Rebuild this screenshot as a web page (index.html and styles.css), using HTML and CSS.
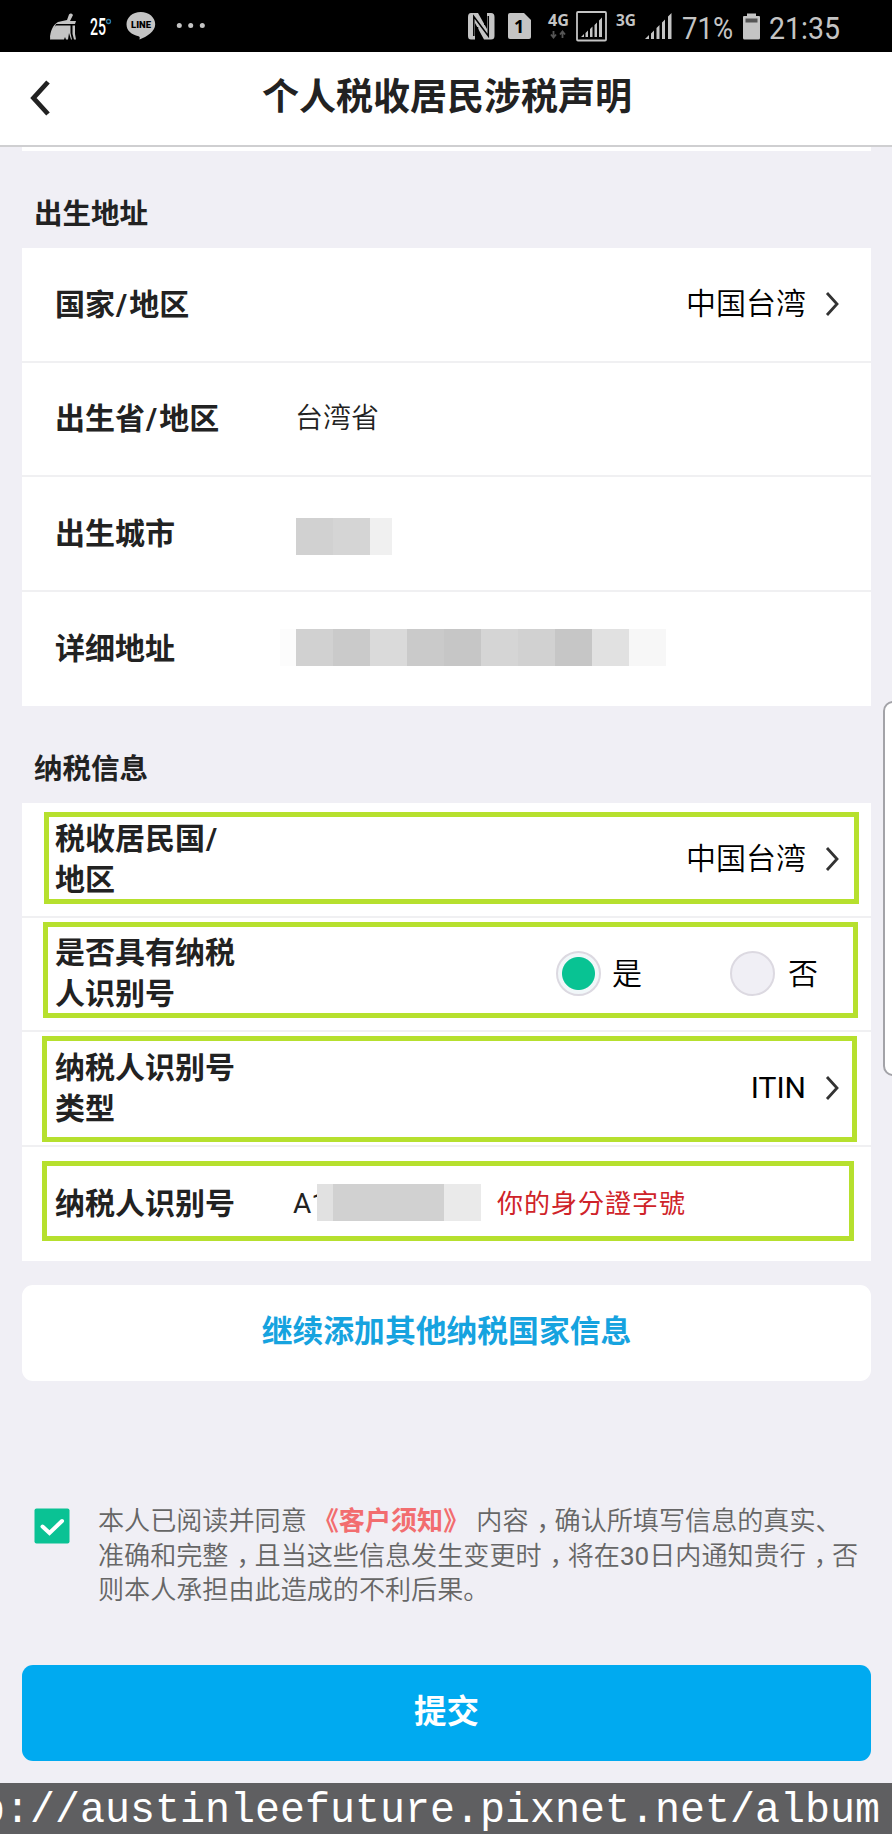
FILE: index.html
```html
<!DOCTYPE html>
<html lang="zh-CN">
<head>
  <meta charset="UTF-8" />
  <title>个人税收居民涉税声明</title>
  <link rel="stylesheet" href="styles.css">
</head>
<body>
  <div class="status-bar">
    <svg class="status-left" width="220" height="52" viewBox="0 0 220 52">
      <!-- broom -->
      <g fill="#c4c4c4">
        <path d="M50 39.500C50 31 53 25 58 22L67 20L69 14.500Q71 12.500 73 15L70 21L76 21L75 24L56 24Z" />
        <path d="M56 25.500H70.500L70.500 33L72 39.500H71L69 33L68 39.500H66L65 37L64 39.500H50Q51 30 56 25.500Z" />
        <path d="M72.500 25.500H75V34L76 39.500H74L72.500 34Z" />
      </g>
      <text x="90" y="35" class="temp" textLength="16" lengthAdjust="spacingAndGlyphs">25</text>
      <circle cx="108.500" cy="21.500" r="2" fill="none" stroke="#2c7aa5" stroke-width="1.300" />
      <!-- chat bubble -->
      <path fill="#c4c4c4" d="M140.800 12C132.500 12 126.500 17.500 126.500 24.200C126.500 30.800 131.500 34.500 138.500 36.200C140.500 36.800 139.500 38.500 139.500 39.500C147 36.500 155.200 31.500 155.200 24.200C155.200 17.500 149 12 140.800 12Z" />
      <text x="131" y="28" class="line-text" textLength="20" lengthAdjust="spacingAndGlyphs">LINE</text>
      <g fill="#c4c4c4">
        <circle cx="179.300" cy="25.500" r="2.500" />
        <circle cx="190.700" cy="25.500" r="2.500" />
        <circle cx="202.300" cy="25.500" r="2.500" />
      </g>
    </svg>
    <svg class="status-right" width="432" height="52" viewBox="460 0 432 52">
      <!-- nfc -->
      <g fill="#c4c4c4">
        <path d="M471 13H478L487 29V13H491Q494.500 13 494.500 17V36Q494.500 39.500 491 39.500H484L475 23V39.500H471Q468 39.500 468 36V17Q468 13 471 13Z" />
      </g>
      <path d="M473.800 36V16.500L488.300 36V16M477.500 38V27M484.800 14V25" fill="none" stroke="#000" stroke-width="1.500" />
      <!-- sim -->
      <path fill="#c4c4c4" d="M510 13H524L531 20V37Q531 39 529 39H510Q508 39 508 37V15Q508 13 510 13Z" />
      <text x="514" y="33" class="sim-text">1</text>
      <text x="548" y="26" class="net" textLength="21" lengthAdjust="spacingAndGlyphs">4G</text>
      <path d="M553.500 31V37M551 34.500L553.500 37.500L556 34.500M562.500 38V32M560 34.500L562.500 31.500L565 34.500" fill="none" stroke="#555" stroke-width="1.800" />
      <!-- signal -->
      <rect x="577" y="12" width="29" height="28.500" rx="1" fill="none" stroke="#c4c4c4" stroke-width="1.800" />
      <g fill="#c4c4c4">
        <path d="M581 37L584 34V37ZM585.500 33L588 30.500V37H585.500ZM590 29L592.500 26.500V37H590ZM594.500 25L597 22.500V37H594.500ZM599 20.500L602 17.500V37H599Z" />
        <path d="M645 39L649 35V39ZM651 33.500L654 30.500V39H651ZM656.500 28L659.500 25V39H656.500ZM662 22.500L665 19.500V39H662ZM668 16.500L671.500 13V39H668Z" />
      </g>
      <text x="616" y="26" class="net" textLength="20" lengthAdjust="spacingAndGlyphs">3G</text>
      <text x="682" y="39" class="clock" textLength="51" lengthAdjust="spacingAndGlyphs">71%</text>
      <!-- battery -->
      <path fill="#c4c4c4" d="M747 13.500H756V16H759Q760 16 760 17V38Q760 39.500 758.500 39.500H744.500Q743 39.500 743 38V17Q743 16 744 16H747Z" />
      <rect x="745.500" y="18.500" width="12" height="4" fill="#555" />
      <text x="769" y="39" class="clock" textLength="71" lengthAdjust="spacingAndGlyphs">21:35</text>
    </svg>
  </div>

  <div class="header">
    <svg class="back" width="20" height="36" viewBox="0 0 20 36"><path d="M18 2L3.500 18L18 34" /></svg>
    <h1>个人税收居民涉税声明</h1>
  </div>

  <div class="content">
    <div class="card-end"></div>

    <h2 class="section-title">出生地址</h2>
    <div class="card">
      <div class="row">
        <div class="label">国家<span class="slash">/</span>地区</div>
        <div class="value">中国台湾</div>
        <svg class="arrow" width="14" height="26" viewBox="0 0 14 26"><path d="M2 2L12 13L2 24" /></svg>
      </div>
      <div class="row">
        <div class="label">出生省<span class="slash">/</span>地区</div>
        <div class="input">台湾省</div>
      </div>
      <div class="row">
        <div class="label">出生城市</div>
        <div class="mosaic mosaic-city"><i class="g3"></i><i class="g4"></i><i class="g8 end"></i></div>
      </div>
      <div class="row">
        <div class="label">详细地址</div>
        <div class="mosaic mosaic-address"><i class="g10 start"></i><i class="g3"></i><i class="g2"></i><i class="g5"></i><i class="g2"></i><i class="g1"></i><i class="g4"></i><i class="g3"></i><i class="g1"></i><i class="g6"></i><i class="g9"></i></div>
      </div>
    </div>

    <h2 class="section-title">纳税信息</h2>
    <div class="card">
      <div class="row two-line">
        <div class="label">税收居民国<span class="slash">/</span><br>地区</div>
        <div class="value">中国台湾</div>
        <svg class="arrow" width="14" height="26" viewBox="0 0 14 26"><path d="M2 2L12 13L2 24" /></svg>
        <div class="mark mark-1"></div>
      </div>
      <div class="row two-line">
        <div class="label">是否具有纳税<br>人识别号</div>
        <div class="radios">
          <span class="radio checked"></span><span class="radio-text">是</span>
          <span class="radio second"></span><span class="radio-text last">否</span>
        </div>
        <div class="mark mark-2"></div>
      </div>
      <div class="row two-line">
        <div class="label">纳税人识别号<br>类型</div>
        <div class="value latin">ITIN</div>
        <svg class="arrow" width="14" height="26" viewBox="0 0 14 26"><path d="M2 2L12 13L2 24" /></svg>
        <div class="mark mark-3"></div>
      </div>
      <div class="row">
        <div class="label">纳税人识别号</div>
        <div class="input tin latin">A1</div>
        <div class="mosaic mosaic-tin"><i class="g6 start"></i><i class="g3"></i><i class="g3"></i><i class="g3"></i><i class="g7"></i></div>
        <div class="note" lang="zh-TW">你的身分證字號</div>
        <div class="mark mark-4"></div>
      </div>
    </div>

    <div class="btn add">继续添加其他纳税国家信息</div>

    <div class="agree">
      <svg class="checkbox" width="36" height="36" viewBox="0 0 36 36">
        <rect x="0.500" y="0.500" width="35" height="35" rx="2" />
        <path d="M8.500 18.500L15.500 25L28 13" />
      </svg>
      <p>本人已阅读并同意<b>《客户须知》</b>内容<span class="comma">，</span>确认所填写信息的真实、<br>准确和完整<span class="comma">，</span>且当这些信息发生变更时<span class="comma">，</span>将在<span class="latin">30</span>日内通知贵行<span class="comma">，</span>否<br>则本人承担由此造成的不利后果。</p>
    </div>

    <div class="btn submit">提交</div>
  </div>

  <div class="watermark">p://austinleefuture.pixnet.net/album</div>
  <div class="edge-panel"></div>
</body>
</html>
```
FILE: styles.css
```css
* {
  box-sizing: border-box;
}

body {
  margin: 0;
  position: relative;
  width: 892px;
  height: 1834px;
  overflow: hidden;
  display: flex;
  flex-direction: column;
  background: #f0eff5;
  color: #222;
  font-family: Roboto, "Noto Sans CJK SC", sans-serif;
}

.status-bar {
  height: 52px;
  background: #000;
  display: flex;
  justify-content: space-between;
}

.status-bar text {
  fill: #c4c4c4;
}

.status-bar .temp {
  fill: #fff;
  font-size: 23px;
  font-weight: 500;
}

.status-bar .line-text {
  fill: #000;
  font-size: 9.5px;
  font-weight: 900;
}

.status-bar .sim-text {
  fill: #000;
  font-family: "Noto Sans", sans-serif;
  font-size: 18px;
  font-weight: bold;
}

.status-bar .net {
  font-family: "Noto Sans", sans-serif;
  font-size: 16px;
  font-weight: bold;
}

.status-bar .clock {
  font-size: 32px;
}

.header {
  height: 95px;
  background: #fff;
  border-bottom: 2px solid #cfcfd1;
  display: flex;
  align-items: center;
}

.back {
  margin: 0 0 1px 30px;
  fill: none;
  stroke: #222;
  stroke-width: 4.8;
}

.header h1 {
  flex: 1;
  margin: 0 48px 1px 0;
  text-align: center;
  font-size: 37px;
  line-height: 50px;
  font-weight: bold;
}

.content {
  height: 1636px;
  padding: 0 21px 0 22px;
}

.card-end {
  height: 4px;
  background: #fff;
}

.section-title {
  height: 97px;
  margin: 0;
  padding: 44px 0 0 12px;
  font-size: 28.5px;
  line-height: 40px;
  font-weight: bold;
}

.card {
  height: 458px;
  background: #fff;
  display: grid;
  grid-template-rows: repeat(4, 1fr);
}

.row {
  position: relative;
  display: flex;
  align-items: center;
  padding: 0 32px 0 33px;
  border-bottom: 2px solid #f0f0f2;
}

.row:last-child {
  border-bottom: none;
}

.label {
  width: 240px;
  font-size: 30px;
  line-height: 41px;
  font-weight: bold;
  white-space: nowrap;
}

.slash {
  padding: 0 2px 0 1px;
}

.two-line .label {
  padding-bottom: 1px;
}

.value {
  margin-left: auto;
  color: #000;
  font-size: 30px;
  line-height: 40px;
  font-weight: 350;
}

.arrow {
  margin-left: 19px;
  fill: none;
  stroke: #333;
  stroke-width: 2.8;
}

.input {
  font-size: 28px;
  line-height: 40px;
  font-weight: 350;
}

.latin {
  font-weight: 400;
}

.tin {
  margin-left: -2px;
}

.mosaic {
  display: flex;
  height: 37px;
}

.mosaic i {
  width: 37px;
}

.mosaic .start {
  width: 16px;
}

.mosaic .end {
  width: 22px;
}

.mosaic-city {
  margin: 6px 0 0 1px;
}

.mosaic-address {
  margin: 0 0 2px -15px;
}

.mosaic-tin {
  margin: 0 0 2px -10px;
  position: relative;
}

.g1 { background: #c6c6c6; }
.g2 { background: #cacaca; }
.g3 { background: #d1d1d1; }
.g4 { background: #d5d5d5; }
.g5 { background: #dadada; }
.g6 { background: #e1e1e1; }
.g7 { background: #eaeaea; }
.g8 { background: #f0f0f0; }
.g9 { background: #f7f7f7; }
.g10 { background: #fcfcfc; }

.radios {
  margin-left: auto;
  display: flex;
  align-items: center;
  color: #000;
  font-size: 30px;
  line-height: 40px;
  font-weight: 350;
}

.radio {
  width: 45px;
  height: 45px;
  margin-right: 11px;
  border: 2px solid #dcd9e1;
  border-radius: 50%;
  background: #f0eff5;
}

.radio.checked {
  background: radial-gradient(circle, #08c393 16px, #f1f7f9 17px);
}

.radio.second {
  margin-left: 88px;
  margin-right: 13px;
}

.radio-text.last {
  margin-right: 21px;
}

.note {
  margin: 0 0 5px 16px;
  color: #cf2329;
  font-family: "Noto Sans CJK TC", sans-serif;
  font-size: 26px;
  letter-spacing: 1px;
}

/* highlight frames over the rows */
.mark {
  position: absolute;
  border: 5px solid #b6e02e;
}

.mark-1 {
  left: 22px;
  top: 9px;
  width: 815px;
  height: 92px;
}

.mark-2 {
  left: 21px;
  top: 4px;
  width: 815px;
  height: 96px;
}

.mark-3 {
  left: 20px;
  top: 4px;
  width: 815px;
  height: 106px;
}

.mark-4 {
  left: 20px;
  top: 14px;
  width: 812px;
  height: 80px;
}

.btn {
  height: 96px;
  border-radius: 11px;
  display: flex;
  align-items: center;
  justify-content: center;
  padding-bottom: 9px;
}

.add {
  margin-top: 24px;
  background: #fff;
  color: #16a3df;
  font-size: 30.8px;
  font-weight: bold;
}

.agree {
  height: 284px;
  padding: 121px 0 0 12px;
  display: flex;
  align-items: flex-start;
  color: #666;
}

.checkbox {
  flex: none;
  margin: 6px 28px 0 0;
}

.checkbox rect {
  fill: #0ac294;
}

.checkbox path {
  fill: none;
  stroke: #fff;
  stroke-width: 4;
  stroke-linecap: round;
}

.agree p {
  margin: 2px 0 0;
  font-size: 26.1px;
  line-height: 34.5px;
  font-weight: 350;
  white-space: nowrap;
}

.agree b {
  margin: 0 7px 0 6px;
  color: #f26d6f;
}

.comma {
  margin: 0 -8px 0 8px;
}

.submit {
  background: #00aaf0;
  color: #fff;
  font-size: 32.5px;
  font-weight: bold;
}

.watermark {
  height: 51px;
  padding-right: 12px;
  background: #5f5f61;
  color: #fff;
  display: flex;
  justify-content: flex-end;
  font-family: "Liberation Mono", monospace;
  font-size: 41.67px;
  line-height: 57px;
  white-space: nowrap;
}

/* side handle over the right edge */
.edge-panel {
  position: absolute;
  left: 883px;
  top: 701px;
  width: 20px;
  height: 375px;
  border: 2px solid #a3a3a8;
  border-radius: 12px;
  background: #fff;
}
```
